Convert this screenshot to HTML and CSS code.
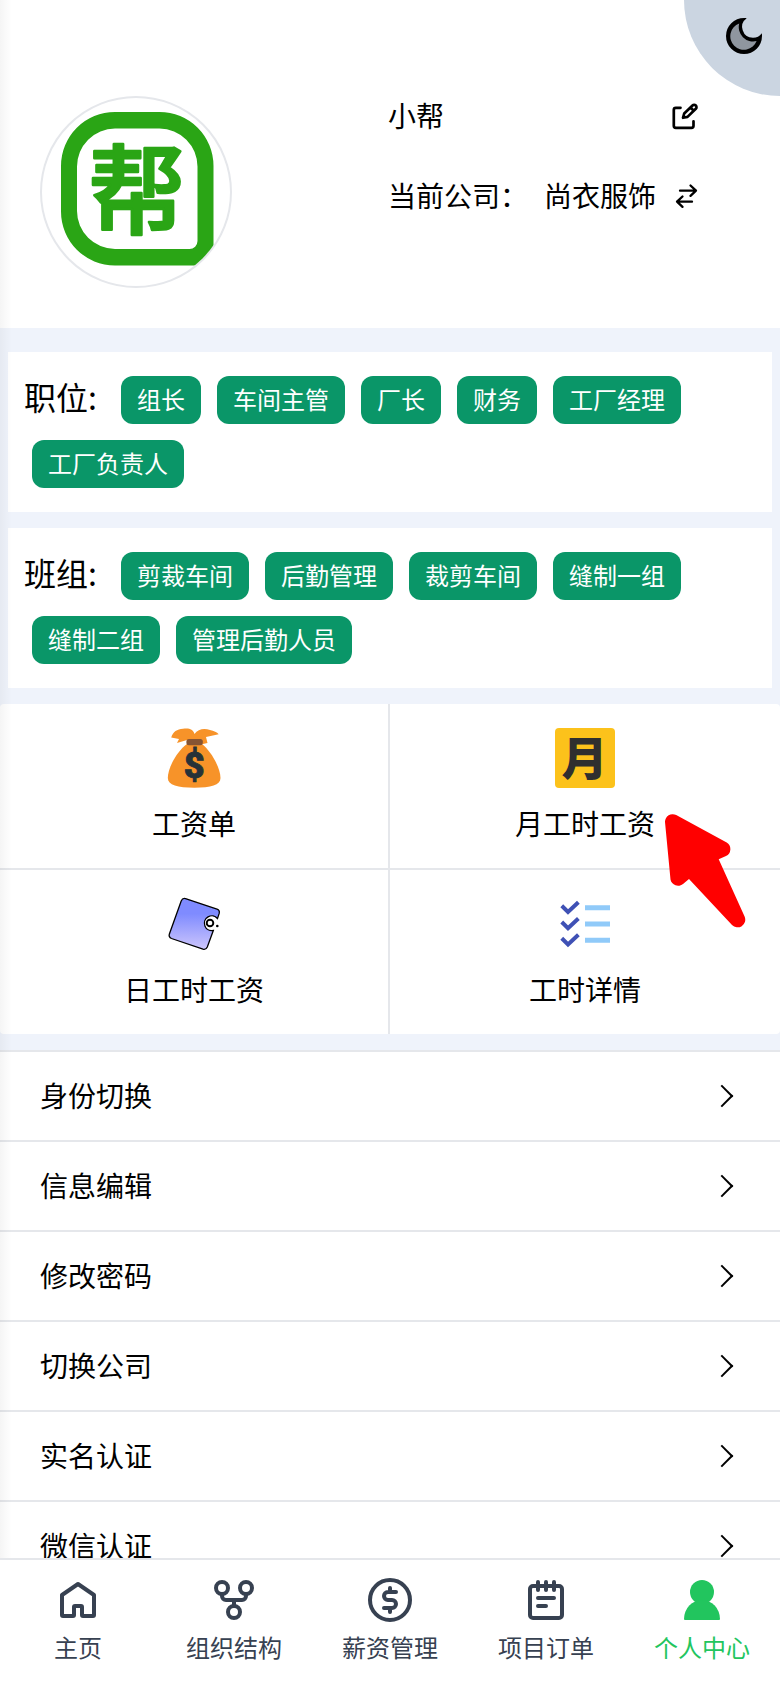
FILE: index.html
```
<!DOCTYPE html>
<html lang="zh-CN">
<head>
  <meta charset="UTF-8" />
  <meta name="viewport" content="width=device-width, initial-scale=1.0" />
  <title>个人中心</title>
  <link rel="stylesheet" href="styles.css">
</head>
<body>
  <div class="page">
    <header class="profile">
      <div class="avatar">
        <svg width="188" height="188" viewBox="0 0 188 188">
          <path d="M73 14h44.500a54 54 0 0 1 54 54v99.500H73a54 54 0 0 1-54-54V68a54 54 0 0 1 54-54z" fill="#2aa515"/>
          <path d="M73 30.500h44.500a38 38 0 0 1 38 38V143a8 8 0 0 1-8 8H73a38 38 0 0 1-38-38V68.500a38 38 0 0 1 38-38z" fill="#fff"/>
          <text class="avatar-text" x="95" y="127.500">帮</text>
        </svg>
      </div>
      <div class="info">
        <div class="info-row">
          <span>小帮</span>
          <svg class="edit-icon" width="28" height="28" viewBox="0 0 28 28">
            <path d="M9.500 5.800H4.800a2 2 0 0 0-2 2v16a2 2 0 0 0 2 2h15.700a2 2 0 0 0 2-2v-4.500"/>
            <path d="M12 15.800l1.200-4.300 8.300-8a2.300 2.300 0 0 1 3.300 3.300l-8.300 8.100zM19.500 5.500l3.200 3.200"/>
          </svg>
        </div>
        <div class="info-row">
          <span>当前公司：</span>
          <span class="company">尚衣服饰</span>
          <svg class="swap-icon" width="28" height="28" viewBox="0 0 28 28">
            <path d="M6 8.700h16M16.500 3.500l5.500 5.200-5.500 5.200M18 19.700H3M8.500 14.500L3 19.700l5.500 5.200"/>
          </svg>
        </div>
      </div>
      <div class="theme-btn">
        <svg width="48" height="48" viewBox="0 0 24 24">
          <path d="M12 3a9 9 0 1 0 9 9c0-.46-.04-.92-.1-1.360a5.389 5.389 0 0 1-4.400 2.260 5.403 5.403 0 0 1-3.140-9.800c-.44-.06-.9-.1-1.360-.1z"/>
          <path fill="#8f969f" d="M9.600 5.700A6.800 6.800 0 1 0 18.300 14.500a7.200 7.200 0 0 1-8.700-8.800z"/>
        </svg>
      </div>
    </header>

    <section class="tags">
      <span class="tags-label">职位:</span>
      <span class="tag">组长</span>
      <span class="tag">车间主管</span>
      <span class="tag">厂长</span>
      <span class="tag">财务</span>
      <span class="tag">工厂经理</span>
      <span class="tag">工厂负责人</span>
    </section>
    <section class="tags">
      <span class="tags-label">班组:</span>
      <span class="tag">剪裁车间</span>
      <span class="tag">后勤管理</span>
      <span class="tag">裁剪车间</span>
      <span class="tag">缝制一组</span>
      <span class="tag">缝制二组</span>
      <span class="tag">管理后勤人员</span>
    </section>

    <div class="grid">
      <div class="cell">
        <svg width="60" height="60" viewBox="0 0 60 60">
          <path fill="#f79329" d="M23 12l-10 3 2-4-7.800-1.500C9 4 13 1 19 .8 25 0 29 1 30.500 6 34 1 40 0 46 2c4 1 7 2 8.700 4.300L42 9l1.500 6-4.500 1z"/>
          <path fill="#f79329" d="M23 16C13 23 3.800 40 3.800 50c0 7 10 9.700 26.500 9.700S56.500 57 56.500 50C56.500 40 47 23 38 16z"/>
          <rect x="22.400" y="11" width="16.400" height="6.300" rx="2.500" fill="#865433"/>
          <text class="bag-text" x="30.300" y="50">$</text>
        </svg>
        <span>工资单</span>
      </div>
      <div class="cell">
        <svg width="60" height="60" viewBox="0 0 60 60">
          <rect width="60" height="60" rx="4" fill="#fcc21b"/>
          <text class="month-text" x="29.500" y="47">月</text>
        </svg>
        <span>月工时工资</span>
        <svg class="pointer" width="110" height="120" viewBox="0 0 110 120">
          <path fill="#f00" d="M5 12A7.700 7.700 0 0 1 16.200 5l50.500 27.500A7.700 7.700 0 0 1 66 46l-7.300 3.300 26 57.500A7.700 7.700 0 0 1 72 115L29 69l-6 5a7.700 7.700 0 0 1-12.500-4.500z"/>
        </svg>
      </div>
      <div class="cell">
        <svg width="60" height="60" viewBox="0 0 60 60">
          <defs>
            <linearGradient id="wallet" x1="0" y1="0" x2="0" y2="1">
              <stop offset="0.300" stop-color="#7f8bff"/>
              <stop offset="1" stop-color="#cdc6fc"/>
            </linearGradient>
          </defs>
          <path fill="url(#wallet)" stroke="#000" stroke-width="1.300" d="M21.500 4.600L53 15.200q3 1.200 2.200 4.200L53.500 24.500A7.400 7.400 0 1 0 49.300 36.500L43.300 53q-1.300 3-4.300 2.200L7.500 44.500q-3-1.300-2.200-4.300L17.200 7q1.300-3.200 4.300-2.400z"/>
          <circle cx="46" cy="29" r="3.300" fill="#fff" stroke="#000" stroke-width="1.900"/>
          <circle cx="53.300" cy="32" r="1.300"/>
        </svg>
        <span>日工时工资</span>
      </div>
      <div class="cell">
        <svg width="60" height="60" viewBox="0 0 48 48">
          <path fill="#90caf9" d="M24 22h20v4H24zM24 35h20v4H24zM24 9h20v4H24z"/>
          <path fill="none" stroke="#3f51b5" stroke-width="3.200" d="M5.400 9.400l5 4.900 8.300-7.700M5.400 22.400l5 4.900 8.300-7.700M5.400 35.400l5 4.900 8.300-7.700"/>
        </svg>
        <span>工时详情</span>
      </div>
    </div>

    <ul class="menu">
      <li><span>身份切换</span><i class="arrow"></i></li>
      <li><span>信息编辑</span><i class="arrow"></i></li>
      <li><span>修改密码</span><i class="arrow"></i></li>
      <li><span>切换公司</span><i class="arrow"></i></li>
      <li><span>实名认证</span><i class="arrow"></i></li>
      <li><span>微信认证</span><i class="arrow"></i></li>
    </ul>
  </div>

  <nav class="tabbar">
    <a class="tab">
      <svg width="48" height="48" viewBox="0 0 24 24"><path d="M4 9.500L12 4l8 5.500v10a.5.5 0 0 1-.5.5H14.500a.5.5 0 0 1-.5-.5V15.500a.5.5 0 0 0-.5-.5h-3a.5.5 0 0 0-.5.5v4a.5.5 0 0 1-.5.5h-5a.5.5 0 0 1-.5-.5z"/></svg>
      <span>主页</span>
    </a>
    <a class="tab">
      <svg width="48" height="48" viewBox="0 0 24 24"><circle cx="6" cy="6" r="3"/><circle cx="18" cy="6" r="3"/><circle cx="12" cy="18" r="3"/><path d="M6 9v1a2 2 0 0 0 2 2h8a2 2 0 0 0 2-2V9M12 12v3"/></svg>
      <span>组织结构</span>
    </a>
    <a class="tab">
      <svg width="48" height="48" viewBox="0 0 24 24"><circle cx="12" cy="12" r="10"/><path d="M15 8h-4a2 2 0 0 0 0 4h2a2 2 0 0 1 0 4H9M12 6v2M12 16v2"/></svg>
      <span>薪资管理</span>
    </a>
    <a class="tab">
      <svg width="48" height="48" viewBox="0 0 24 24"><rect x="4" y="5" width="16" height="16" rx="1.500"/><path d="M8 3v4M12 3v4M16 3v4M8 11h8M8 15h4"/></svg>
      <span>项目订单</span>
    </a>
    <a class="tab active">
      <svg width="48" height="48" viewBox="0 0 24 24"><circle cx="12" cy="8" r="6"/><path d="M3 21.500a9 9.500 0 0 1 18 0 .5.5 0 0 1-.5.5h-17a.5.5 0 0 1-.5-.5z"/></svg>
      <span>个人中心</span>
    </a>
  </nav>
</body>
</html>
```

FILE: styles.css
```
* {
  box-sizing: border-box;
}
body {
  margin: 0;
  height: 1688px;
  display: flex;
  flex-direction: column;
  overflow: hidden;
  background-color: #eff3fb;
  color: #000;
  font-family: 'Noto Sans CJK SC', sans-serif;
  font-size: 28px;
  line-height: 40px;
  white-space: nowrap;
}
svg {
  display: block;
  flex-shrink: 0;
}
.page {
  flex: 1;
  min-height: 0;
  overflow: hidden;
  position: relative;
}
/* soft shade along the left edge */
.page::after {
  content: '';
  position: absolute;
  left: 0;
  top: 0;
  width: 12px;
  height: 100%;
  background: linear-gradient(to right, rgba(0, 0, 0, 0.04), rgba(0, 0, 0, 0));
}
.profile {
  position: relative;
  display: flex;
  height: 328px;
  padding: 96px 80px 0 40px;
  background-color: #fff;
}
.avatar {
  width: 192px;
  height: 192px;
  flex-shrink: 0;
  border: 2px solid #e5e7eb;
  border-radius: 50%;
  overflow: hidden;
}
.avatar-text {
  font-size: 97px;
  font-weight: 500;
  text-anchor: middle;
  fill: #2aa515;
  stroke: #2aa515;
  stroke-width: 2.5px;
  stroke-linejoin: round;
}
.info {
  margin-left: 156px;
}
.info-row {
  display: flex;
  align-items: center;
  width: 312px;
  height: 40px;
  margin-bottom: 40px;
}
.info-row span {
  padding-bottom: 2px;
}
.edit-icon {
  margin-left: auto;
  margin-right: 1px;
}
.edit-icon,
.swap-icon {
  fill: none;
  stroke: #000;
  stroke-width: 2.7;
  stroke-linecap: round;
  stroke-linejoin: round;
}
.swap-icon {
  margin-left: 18px;
  stroke-width: 2.3;
}
.company {
  margin-left: 16px;
}
.theme-btn {
  position: absolute;
  top: 0;
  right: 0;
  width: 96px;
  height: 96px;
  padding: 12px 0 0 36px;
  background-color: #cbd5e1;
  border-radius: 0 0 0 96px;
}
.tags {
  display: flex;
  flex-wrap: wrap;
  align-items: center;
  margin: 16px 8px 0;
  padding: 16px;
  background-color: #fff;
}
.profile + .tags {
  margin-top: 24px;
}
.tags-label {
  margin-right: 16px;
  padding-bottom: 8px;
  font-size: 32px;
}
.tag {
  height: 48px;
  margin: 8px;
  padding: 0 16px;
  border-radius: 12px;
  background-color: #0a9668;
  color: #fff;
  font-size: 24px;
  line-height: 46px;
}
.grid {
  display: grid;
  grid-template-columns: 390px 390px;
  margin: 16px 0;
  background-color: #fff;
  border-radius: 4px;
}
.cell {
  position: relative;
  display: flex;
  flex-direction: column;
  align-items: center;
  gap: 15px;
  padding: 24px 0 25px;
}
.cell:nth-child(odd) {
  border-right: 2px solid #e5e7eb;
}
.cell:nth-child(-n+2) {
  border-bottom: 2px solid #e5e7eb;
}
.bag-text {
  font-family: Roboto, sans-serif;
  font-size: 36px;
  font-weight: 900;
  text-anchor: middle;
  fill: #263238;
  stroke: #263238;
  stroke-width: 0.8px;
}
.month-text {
  font-size: 46px;
  font-weight: 900;
  text-anchor: middle;
  fill: #2f2f2f;
}
.pointer {
  position: absolute;
  left: 270px;
  top: 106px;
  z-index: 1;
}
.menu {
  margin: 0;
  padding: 0;
  list-style: none;
}
.menu li {
  display: flex;
  align-items: center;
  justify-content: space-between;
  height: 90px;
  padding: 0 50px 0 40px;
  border-top: 2px solid #e5e7eb;
  background-color: #fff;
}
.menu span {
  padding-bottom: 2px;
}
.arrow {
  width: 16px;
  height: 16px;
  border-top: 2.5px solid #000;
  border-right: 2.5px solid #000;
  transform: rotate(45deg);
}
.tabbar {
  display: flex;
  height: 130px;
  border-top: 2px solid #e5e7eb;
  background-color: #fff;
}
.tab {
  flex: 1;
  display: flex;
  flex-direction: column;
  align-items: center;
  padding-top: 16px;
  color: #374151;
  font-size: 24px;
  line-height: 32px;
}
.tab span {
  margin-top: 7px;
}
.tab svg {
  fill: none;
  stroke: currentColor;
  stroke-width: 2;
  stroke-linecap: round;
  stroke-linejoin: round;
}
.tab.active {
  color: #22c55e;
}
.tab.active svg {
  fill: currentColor;
  stroke: none;
}
```
